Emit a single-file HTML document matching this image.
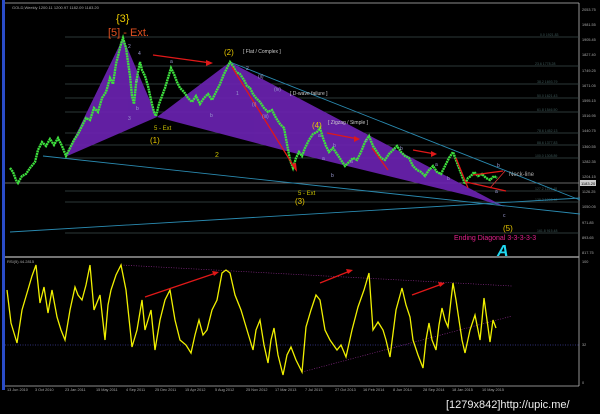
<!DOCTYPE html><html><head><style>
body{margin:0;background:#fff;width:600px;height:414px;overflow:hidden}
svg{display:block}
text{font-family:"Liberation Sans",sans-serif}
</style></head><body>
<svg width="600" height="414" viewBox="0 0 600 414">
<rect width="600" height="414" fill="#000"/>
<rect x="2" y="0" width="3" height="390" fill="#2a4cc8"/>
<line x1="5" y1="3" x2="579" y2="3" stroke="#bbb" stroke-width="0.8"/>
<line x1="579" y1="3" x2="579" y2="386" stroke="#bbb" stroke-width="0.8"/>
<line x1="5" y1="257" x2="579" y2="257" stroke="#999" stroke-width="1.5"/>
<line x1="5" y1="386" x2="579" y2="386" stroke="#bbb" stroke-width="0.8"/>
<g stroke="#3a4a4a" stroke-width="0.7">
<line x1="65" y1="37" x2="579" y2="37"/><line x1="65" y1="66" x2="579" y2="66"/>
<line x1="65" y1="84" x2="579" y2="84"/><line x1="65" y1="98" x2="579" y2="98"/>
<line x1="65" y1="112" x2="579" y2="112"/><line x1="65" y1="133" x2="579" y2="133"/>
<line x1="65" y1="145" x2="579" y2="145"/><line x1="65" y1="158" x2="579" y2="158"/>
<line x1="5" y1="183" x2="579" y2="183" stroke="#888"/><line x1="65" y1="191" x2="579" y2="191"/>
<line x1="65" y1="202" x2="579" y2="202"/><line x1="65" y1="233" x2="579" y2="233"/>
</g>
<g fill="#3d5858" font-size="3.5">
<text x="540" y="36">0.0 1921.83</text><text x="535" y="65">23.6 1778.28</text>
<text x="537" y="83">38.2 1693.79</text><text x="537" y="97">50.0 1621.43</text>
<text x="537" y="111">61.8 1546.50</text><text x="537" y="132">78.6 1452.13</text>
<text x="537" y="144">88.6 1377.83</text><text x="535" y="157">100.0 1308.89</text>
<text x="535" y="190">127.2 1161.48</text><text x="535" y="201">138.2 1098.48</text>
<text x="537" y="232">161.8 915.48</text>
</g>
<g fill="#6a22b0" opacity="0.92">
<polygon points="65,157 123,38 157,117"/>
<polygon points="157,117 230,62 505,207 470,196 290,152"/>
</g>
<g stroke="#2a8ab0" stroke-width="0.9" fill="none">
<line x1="43" y1="156" x2="580" y2="214"/>
<line x1="230" y1="62" x2="580" y2="200"/>
<line x1="10" y1="232" x2="580" y2="198"/>
</g>
<line x1="490" y1="188" x2="505" y2="171" stroke="#d33" stroke-width="0.8"/>
<polyline fill="none" stroke="#3ee03e" stroke-width="2.4" stroke-dasharray="2,0.6" points="10,168 13,172 16,180 18,183 22,176 26,174 30,168 35,162 38,150 42,142 46,146 50,139 54,145 58,138 62,146 66,156 70,148 74,140 78,134 82,126 86,118 90,120 94,108 98,112 102,98 106,92 110,78 113,84 116,64 119,52 121,44 123,38 126,48 128,62 130,76 132,96 134,104 136,84 138,72 140,62 142,70 145,76 148,86 151,100 154,112 156,116 159,104 162,96 165,88 168,78 171,68 174,74 177,82 180,88 184,92 188,98 192,102 196,96 200,104 204,98 208,94 212,100 216,92 220,84 224,74 228,66 230,62 233,66 236,72 240,74 244,80 247,86 250,88 253,94 256,98 260,102 264,108 268,112 272,110 276,118 280,124 284,128 287,144 290,160 293,168 296,158 299,152 302,156 305,148 309,140 313,134 317,132 320,128 323,138 326,146 329,152 333,148 337,154 341,160 345,166 349,162 353,158 357,160 361,152 365,142 369,136 373,146 377,152 381,158 385,160 389,154 393,150 397,146 401,152 405,156 409,158 413,166 417,170 421,172 425,176 429,170 433,166 437,172 441,174 445,166 449,158 453,152 456,160 459,168 462,176 465,184 468,178 471,176 474,172 478,176 482,174 486,178 490,180 494,176 497,178"/>
<g stroke="#e01818" stroke-width="1.3">
<line x1="153" y1="55" x2="211" y2="63"/><line x1="232" y1="67" x2="296" y2="170"/>
<line x1="327" y1="133" x2="358" y2="139"/><line x1="413" y1="150" x2="435" y2="154"/>
<line x1="372" y1="148" x2="388" y2="170"/><line x1="456" y1="158" x2="468" y2="188"/>
<line x1="473" y1="175" x2="503" y2="171"/><line x1="466" y1="182" x2="506" y2="191"/>
</g>
<g fill="#e01818"><polygon points="213,63 206,60 206,66"/><polygon points="297,172 291,164 296,163"/><polygon points="360,139 354,136 354,142"/><polygon points="437,154 431,151 431,157"/></g>
<g font-size="11" fill="#e8c800"><text x="116" y="22">{3}</text></g>
<text x="108" y="36" font-size="11" fill="#e05020">[5] - Ext.</text>
<text x="224" y="55" font-size="8" fill="#e8c800">(2)</text>
<text x="243" y="53" font-size="5" fill="#ccc">[ Flat / Complex ]</text>
<text x="290" y="95" font-size="5" fill="#ccc">[ D-wave failure ]</text>
<text x="312" y="128" font-size="8" fill="#e8c800">(4)</text>
<text x="328" y="124" font-size="5" fill="#ccc">[ Zigzag / Simple ]</text>
<text x="150" y="143" font-size="8" fill="#e8c800">(1)</text>
<text x="154" y="130" font-size="6" fill="#c8c000">5 - Ext</text>
<text x="298" y="195" font-size="6" fill="#c8c000">5 - Ext</text>
<text x="295" y="204" font-size="8" fill="#e8c800">(3)</text>
<text x="215" y="157" font-size="7" fill="#c8c000">2</text>
<text x="503" y="231" font-size="8" fill="#e8c800">(5)</text>
<text x="509" y="176" font-size="6" fill="#aaa">Neck-line</text>
<text x="454" y="240" font-size="7" fill="#e0208a">Ending Diagonal 3-3-3-3-3</text>
<text x="497" y="256" font-size="16" font-style="italic" font-weight="bold" fill="#20d8f0">A</text>
<g font-size="5" fill="#9a9ad0">
<text x="128" y="48">2</text><text x="138" y="55">4</text><text x="170" y="63">a</text><text x="135" y="82">a</text><text x="136" y="110">b</text><text x="128" y="120">3</text><text x="246" y="70">2</text><text x="258" y="78">(ii)</text><text x="236" y="95">1</text><text x="252" y="106">(i)</text><text x="274" y="91">(iv)</text><text x="262" y="118">(iii)</text><text x="210" y="117">b</text><text x="318" y="137">a</text><text x="333" y="147">b</text><text x="322" y="160">a</text><text x="350" y="163">a</text><text x="331" y="177">b</text><text x="365" y="142">c</text><text x="400" y="150">b</text><text x="435" y="166">a</text><text x="447" y="180">b</text><text x="497" y="167">b</text><text x="495" y="193">a</text><text x="503" y="217">c</text>
</g>
<g font-size="4" fill="#aaa">
<text x="12" y="9">GOLD,Weekly  1200.11  1200.97  1182.09  1183.20</text>
<text x="7" y="263">RSI(5) 44.2815</text>
</g>
<g font-size="3.8" fill="#aaa">
<text x="582" y="11">2053.75</text><text x="582" y="26">1981.55</text><text x="582" y="41">1905.45</text><text x="582" y="56">1827.40</text><text x="582" y="72">1749.25</text><text x="582" y="87">1671.05</text><text x="582" y="102">1595.15</text><text x="582" y="117">1516.95</text><text x="582" y="132">1440.75</text><text x="582" y="148">1360.55</text><text x="582" y="163">1282.35</text><text x="582" y="178">1204.15</text><text x="582" y="193">1126.25</text><text x="582" y="208">1050.05</text><text x="582" y="224">971.85</text><text x="582" y="239">893.65</text><text x="582" y="254">817.75</text>
<text x="582" y="263">100</text><text x="582" y="346">32</text><text x="582" y="384">0</text>
</g>
<rect x="580" y="180" width="16" height="6" fill="#ccc"/>
<text x="581" y="185" font-size="4" fill="#000">1183.20</text>
<line x1="5" y1="345" x2="579" y2="345" stroke="#4040a0" stroke-width="0.7" stroke-dasharray="1,1.5"/>
<line x1="121" y1="265" x2="512" y2="286" stroke="#8a2a8a" stroke-width="0.7" stroke-dasharray="1,1.5"/>
<line x1="302" y1="372" x2="512" y2="316" stroke="#8a2a8a" stroke-width="0.7" stroke-dasharray="1,1.5"/>
<polyline fill="none" stroke="#f0f000" stroke-width="1.3" points="7,290 11,323 17,343 22,310 27,293 32,276 36,265 40,303 44,287 48,313 52,290 57,317 61,330 65,340 70,310 75,287 78,295 82,300 86,285 90,265 94,310 100,295 105,340 108,305 111,290 116,275 121,265 126,290 132,347 137,330 142,300 145,330 151,310 155,350 160,320 165,300 170,290 175,320 180,340 186,345 191,353 195,335 199,320 203,335 207,330 212,310 217,300 222,273 226,270 230,273 235,295 241,310 247,330 253,350 256,330 260,320 264,345 268,363 271,340 274,328 278,355 283,375 287,355 291,347 296,360 302,372 306,327 311,310 316,295 320,300 325,330 330,340 337,350 341,345 346,357 352,330 358,307 364,290 369,273 373,330 378,322 383,330 386,340 390,357 396,310 402,288 406,305 410,317 413,340 418,355 423,368 426,340 429,323 432,340 436,350 439,325 442,308 445,320 448,327 451,300 453,283 456,300 459,320 462,340 465,353 470,330 475,315 478,330 480,340 482,320 484,298 487,320 490,342 493,320 496,328"/>
<g stroke="#e01818" stroke-width="1.3"><line x1="145" y1="297" x2="216" y2="273"/><line x1="320" y1="283" x2="350" y2="271"/><line x1="412" y1="295" x2="442" y2="284"/></g>
<g fill="#e01818"><polygon points="219,272 212,271 214,276"/><polygon points="353,270 346,269 348,274"/><polygon points="445,283 438,282 440,287"/></g>
<g font-size="3.8" fill="#aaa">
<text x="7" y="391">13 Jun 2010</text><text x="35" y="391">3 Oct 2010</text><text x="65" y="391">23 Jan 2011</text><text x="96" y="391">15 May 2011</text><text x="126" y="391">4 Sep 2011</text><text x="155" y="391">25 Dec 2011</text><text x="185" y="391">15 Apr 2012</text><text x="215" y="391">5 Aug 2012</text><text x="246" y="391">25 Nov 2012</text><text x="275" y="391">17 Mar 2013</text><text x="305" y="391">7 Jul 2013</text><text x="335" y="391">27 Oct 2013</text><text x="363" y="391">16 Feb 2014</text><text x="393" y="391">8 Jun 2014</text><text x="423" y="391">28 Sep 2014</text><text x="452" y="391">18 Jan 2015</text><text x="482" y="391">10 May 2015</text>
</g>
<text x="446" y="408" font-size="11" fill="#eee" font-family="Liberation Mono,monospace">[1279x842]http://upic.me/</text>
</svg>
</body></html>
